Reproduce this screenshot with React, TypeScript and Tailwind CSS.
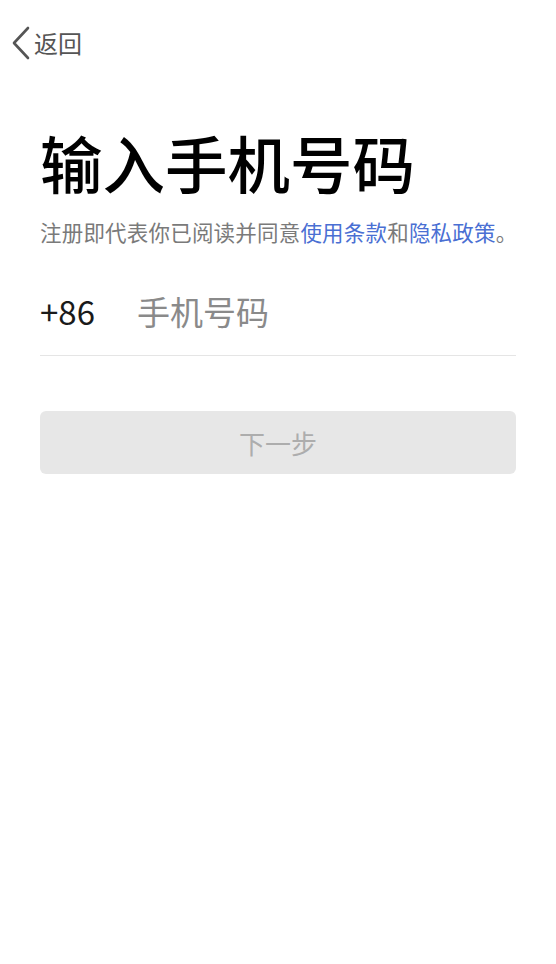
export default function App() {
  return (
    <div className="min-h-[964px] w-full bg-white font-['Noto_Sans_CJK_SC','Noto_Sans',sans-serif]">
      <div className="flex h-[86px] items-center pl-[11px]">
        <button className="flex items-center text-[#555]">
          <svg width="20" height="34" viewBox="0 0 20 34" fill="none">
            <path d="M17 2 L3 17 L17 32" stroke="currentColor" strokeWidth="2.6" strokeLinecap="round" strokeLinejoin="round" />
          </svg>
          <span className="ml-[3px] text-[24px] leading-none">返回</span>
        </button>
      </div>

      <div className="px-[40px]">
        <h1 className="mt-[38px] text-[62.5px] leading-[76px] font-medium text-black">输入手机号码</h1>
        <p className="mt-[17px] text-[21.5px] leading-[30px] whitespace-nowrap tracking-[0.2px] text-[#7a7a7a]">
          注册即代表你已阅读并同意<span className="text-[#4a6fd3]">使用条款</span>和
          <span className="text-[#4a6fd3]">隐私政策</span>。
        </p>

        <div className="mt-[21px] flex h-[88px] items-center border-b border-[#e5e5e5]">
          <span className="w-[97px] text-[33px] text-[#1a1a1a]">+86</span>
          <input
            className="flex-1 bg-transparent text-[33px] text-[#222] outline-none placeholder:text-[#8a8a8a]"
            placeholder="手机号码"
          />
        </div>

        <button className="mt-[55px] flex h-[63px] w-full items-center justify-center rounded-[6px] bg-[#e7e7e7] text-[26px] text-[#adadad]">
          下一步
        </button>
      </div>
    </div>
  );
}
